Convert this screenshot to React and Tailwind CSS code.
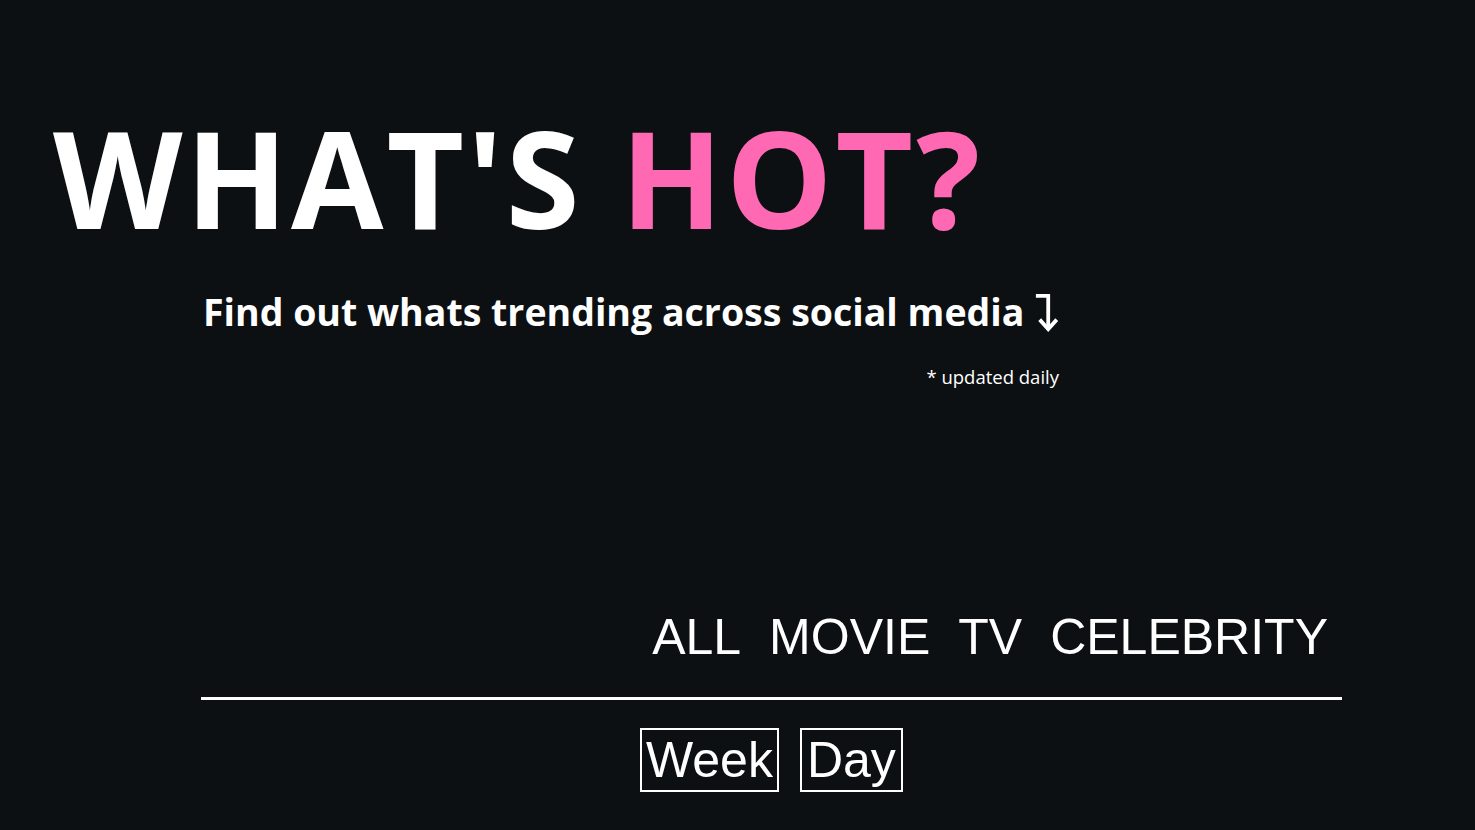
import React from "react";

export default function App() {
  return (
    <div className="min-h-[830px] w-full bg-[#0d1012] text-white overflow-hidden" style={{ fontFamily: '"Open Sans", "Noto Sans", sans-serif' }}>
      <div className="pt-[110px] pl-[53px]">
        <h1 className="text-[134px] font-bold leading-none tracking-[3px] whitespace-nowrap">
          WHAT'S <span className="text-[#ff69b4]">HOT?</span>
        </h1>
      </div>
      <div className="ml-[203px] mt-[46px] w-[856px]">
        <div className="flex items-center text-[37.5px] font-bold leading-none whitespace-nowrap">
          <span>Find out whats trending across social media</span>
          <svg className="ml-[10px] mt-[2px]" width="26" height="42" viewBox="0 0 26 42" fill="none">
            <path d="M2 3 H15 V36" stroke="white" strokeWidth="4" strokeLinejoin="miter" />
            <path d="M6 28 L15 38 L24 28" stroke="white" strokeWidth="4" />
          </svg>
        </div>
        <div className="mt-[34px] text-right text-[18.5px] leading-none">* updated daily</div>
      </div>
      <div className="ml-[201px] w-[1141px] mt-[225px]" style={{ fontFamily: '"Liberation Sans", Arial, sans-serif' }}>
        <nav className="flex justify-end gap-[28px] pr-[14px] text-[50px] leading-none">
          <span>ALL</span>
          <span>MOVIE</span>
          <span>TV</span>
          <span>CELEBRITY</span>
        </nav>
        <div className="mt-[35px] h-[3px] bg-white" />
        <div className="mt-[28px] flex gap-[21px] pl-[439px]">
          <button className="border-2 border-white px-[4px] text-[50px] leading-[60px] text-white">Week</button>
          <button className="border-2 border-white px-[5px] text-[50px] leading-[60px] text-white">Day</button>
        </div>
      </div>
    </div>
  );
}
